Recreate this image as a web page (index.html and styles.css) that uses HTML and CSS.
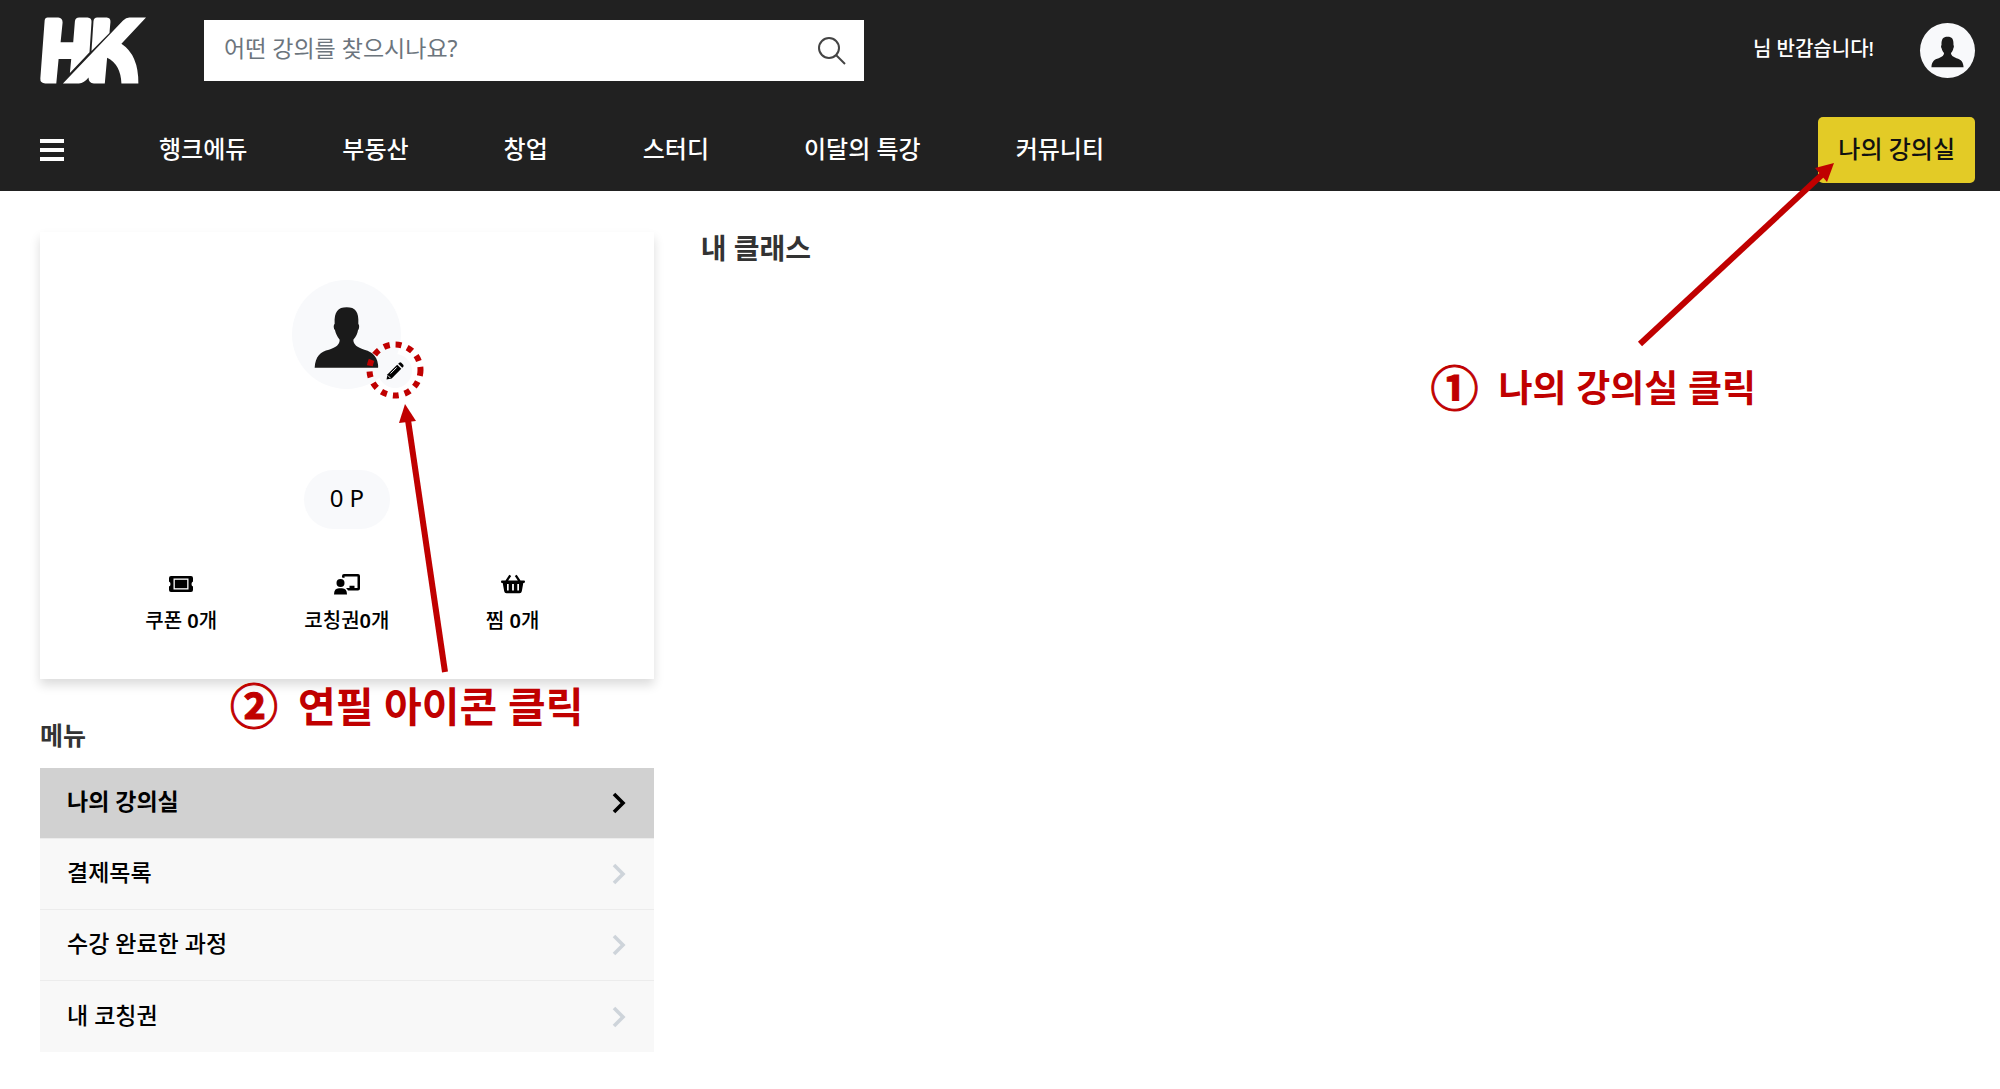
FILE: index.html
```html
<!DOCTYPE html>
<html lang="ko">
<head>
<meta charset="utf-8">
<meta name="viewport" content="width=device-width, initial-scale=1">
<title>나의 강의실</title>
<link rel="stylesheet" href="styles.css">
</head>
<body>
<svg class="sprite" aria-hidden="true">
  <symbol id="person" viewBox="67 57 327 327">
    <path d="M135 320C137 286 152 271 178 266C200 259 210 250 210 236C202 226 198 217 196 208C191 202 191 192 195 188C193 152 205 139 231 139C257 139 268 152 266 188C270 193 269 203 265 208C263 218 260 226 251 236C251 250 262 259 284 266C312 273 325 290 326 320Z"/>
  </symbol>
  <symbol id="chevron" viewBox="0 0 14 22">
    <path d="M2 2L11 11L2 20" fill="none" stroke="currentColor" stroke-width="3.600"/>
  </symbol>
</svg>

<header class="site-header">
  <div class="header-top">
    <a class="logo" href="#" aria-label="HK">
      <svg viewBox="119 50 319 201" aria-hidden="true">
        <path d="M142 51H174Q187 52 187 66L181 126H219L224 63Q225 51 237 51H262Q275 52 274 65L268 156L209 218L213 176H175L168 250H135Q119 249 120 235L133 60Q134 51 142 51Z"/>
        <path d="M291 51H320Q332 52 331 65L328 98L274 152L280 62Q281 51 291 51Z"/>
        <path d="M438 51H388Q378 51 369 60L188 250H236Q252 249 265 232Q265 249 281 250H314L321 172Q362 192 364 250H415Q416 164 364 130Z"/>
      </svg>
    </a>
    <form class="search">
      <input class="search-input" type="search" placeholder="어떤 강의를 찾으시나요?" aria-label="강의 검색">
      <button class="search-button" type="button" aria-label="검색">
        <svg viewBox="0 0 28 28"><circle cx="11" cy="11" r="10"/><path d="M18 18L27 27"/></svg>
      </button>
    </form>
    <div class="account">
      <span class="greeting">님 반갑습니다!</span>
      <a class="avatar avatar-small" href="#" aria-label="내 프로필"><svg><use href="#person"/></svg></a>
    </div>
  </div>
  <nav class="header-nav">
    <button class="hamburger" type="button" aria-label="전체 메뉴"><span></span><span></span><span></span></button>
    <a href="#">행크에듀</a>
    <a href="#">부동산</a>
    <a href="#">창업</a>
    <a href="#">스터디</a>
    <a href="#">이달의 특강</a>
    <a href="#">커뮤니티</a>
    <button class="classroom-button" type="button">나의 강의실</button>
  </nav>
</header>

<main class="content">
  <aside>
    <section class="profile-card">
      <div class="profile-photo">
        <div class="avatar avatar-large"><svg><use href="#person"/></svg></div>
        <button class="edit-button" type="button" aria-label="프로필 수정">
          <svg viewBox="0 0 18 18">
            <path d="M0.500 17.500L1.600 12.300L11.200 2.700L15.300 6.800L5.700 16.400Z"/>
            <path d="M12.200 1.700L13.300 0.700Q14.300 0 15.300 0.800L17.200 2.700Q18 3.700 17.300 4.700L16.300 5.800Z"/>
            <path class="cut" d="M4.500 11.600L10.700 5.400M2 13.600L4.400 16"/>
          </svg>
        </button>
        <svg class="ring" viewBox="0 0 58 58"><circle cx="29" cy="29" r="25.500"/></svg>
      </div>
      <p class="points">0 P</p>
      <ul class="stats">
        <li>
          <svg viewBox="0 0 24 22">
            <path fill-rule="evenodd" d="M2 3H22Q24 3 24 5V8.500Q22.500 9 22.500 11T24 13.500V17Q24 19 22 19H2Q0 19 0 17V13.500Q1.500 13 1.500 11T0 8.500V5Q0 3 2 3ZM4.500 5.500V16.500H19.500V5.500Z"/>
            <path d="M5.800 6.800H18.200V15.200H5.800Z"/>
          </svg>
          <a href="#">쿠폰 <b>0</b>개</a>
        </li>
        <li>
          <svg viewBox="0 0 26 22">
            <circle cx="6.500" cy="10" r="4"/>
            <path d="M0 21.500Q0 15.200 5 15.200H8Q13 15.200 13 21.500Z"/>
            <path d="M8 4.500V3Q8 1 10 1H24Q26 1 26 3V15.500Q26 17.500 24 17.500H14Q13.300 16 12 15H15.500V12.800H20.500V15H23.500V3.500H10.500V5Q9.300 4.500 8 4.500Z"/>
          </svg>
          <a href="#">코칭권<b>0</b>개</a>
        </li>
        <li>
          <svg viewBox="0 0 24 22">
            <path fill-rule="evenodd" d="M0 8.500Q0 7.500 1 7.500H4.500L8.300 1.800L10.200 3L7.200 7.500H16.800L13.800 3L15.700 1.800L19.500 7.500H23Q24 7.500 24 8.500T23 10H22.300L20.800 18.200Q20.500 20.200 18.500 20.200H5.500Q3.500 20.200 3.200 18.200L1.700 10H1Q0 10 0 8.500ZM6 11V17.500H7.700V11ZM11.100 11V17.500H12.900V11ZM16.300 11V17.500H18V11Z"/>
          </svg>
          <a href="#">찜 <b>0</b>개</a>
        </li>
      </ul>
    </section>

    <h2 class="menu-title">메뉴</h2>
    <nav class="side-menu">
      <a class="active" href="#"><span>나의 강의실</span><svg><use href="#chevron"/></svg></a>
      <a href="#"><span>결제목록</span><svg><use href="#chevron"/></svg></a>
      <a href="#"><span>수강 완료한 과정</span><svg><use href="#chevron"/></svg></a>
      <a href="#"><span>내 코칭권</span><svg><use href="#chevron"/></svg></a>
    </nav>
  </aside>
  <section>
    <h1 class="class-title">내 클래스</h1>
  </section>
</main>

<svg class="arrow arrow-classroom" viewBox="0 0 200 190" aria-hidden="true">
  <path d="M4 184L190 11"/><polygon points="198,3 179,8 191,22"/>
</svg>
<p class="note note-classroom"><span class="num">①</span>나의 강의실 클릭</p>

<svg class="arrow arrow-pencil" viewBox="0 0 60 270" aria-hidden="true">
  <path d="M55 268L18 16"/><polygon points="15,0 9,19 26,17"/>
</svg>
<p class="note note-pencil"><span class="num">②</span>연필 아이콘 클릭</p>
</body>
</html>
```
FILE: styles.css
```css
* { box-sizing: border-box; }

body {
  position: relative;
  margin: 0;
  background: #fff;
  color: #000;
  font-family: "Noto Sans", "Noto Sans CJK KR", sans-serif;
  font-size: 23px;
}

h1, h2, p, ul { margin: 0; padding: 0; }
a { color: inherit; text-decoration: none; }
button { border: 0; padding: 0; font: inherit; color: inherit; background: none; cursor: pointer; }
svg { display: block; }
.sprite { position: absolute; width: 0; height: 0; }

/* Header */
.site-header {
  padding: 17px 25px 8px 40px;
  background: #212121;
  color: #fff;
}
.header-top { display: flex; align-items: center; }
.logo svg { width: 106px; height: 67px; fill: #fff; }
.search {
  display: flex;
  align-items: center;
  flex: 0 1 660px;
  height: 61px;
  margin-left: 58px;
  padding: 0 18px 0 20px;
  background: #fff;
}
.search-input {
  flex: 1;
  min-width: 0;
  border: 0;
  padding: 0 0 6px;
  outline: 0;
  background: none;
  font: inherit;
  color: #212529;
}
.search-input::placeholder { color: #6c757d; opacity: 1; }
.search-button svg { width: 28px; height: 28px; fill: none; stroke: #444; stroke-width: 2; }
.account { display: flex; align-items: center; gap: 46px; margin-left: auto; }
.greeting { padding-bottom: 6px; font-size: 20px; font-weight: 500; }

.avatar { border-radius: 50%; background: #f8f9fb; }
.avatar svg { width: 100%; height: 100%; fill: #1a1a1a; }
.avatar-small { width: 55px; height: 55px; }
.avatar-large { width: 109px; height: 109px; }

.header-nav {
  display: flex;
  align-items: center;
  gap: 95px;
  margin-top: 33px;
  font-size: 24px;
  font-weight: 500;
}
.header-nav a { padding-bottom: 6px; }
.hamburger { display: grid; gap: 5px; width: 24px; }
.hamburger span { height: 4px; background: #fff; }
.classroom-button {
  height: 66px;
  margin-left: auto;
  padding: 0 20px 6px;
  border-radius: 5px;
  background: #e3cb26;
  color: #111;
}

/* Page body */
.content {
  display: grid;
  grid-template-columns: 32% minmax(0, 1fr);
  gap: 47px;
  padding: 41px 42px 36px 40px;
}
.profile-card {
  display: flex;
  flex-direction: column;
  align-items: center;
  padding: 48px 0 44px;
  box-shadow: 0 6px 10px rgba(0, 0, 0, 0.14);
}
.profile-photo { position: relative; }
.edit-button {
  position: absolute;
  right: -11px;
  bottom: 1px;
  display: grid;
  place-items: center;
  width: 34px;
  height: 34px;
  border-radius: 50%;
  background: #f8f9fb;
}
.edit-button svg { width: 18px; height: 18px; }
.edit-button .cut { fill: none; stroke: #f8f9fb; stroke-width: 1; }
.ring {
  position: absolute;
  right: -23px;
  bottom: -10px;
  width: 58px;
  height: 58px;
  fill: none;
  stroke: #c00000;
  stroke-width: 6;
  stroke-dasharray: 6 6;
  pointer-events: none;
}
.points {
  height: 59px;
  margin-top: 81px;
  padding: 0 26px;
  border-radius: 30px;
  background: #f8f9fb;
  font-size: 24px;
  line-height: 56px;
}
.stats {
  display: grid;
  grid-template-columns: repeat(3, 1fr);
  width: 81%;
  margin-top: 44px;
  list-style: none;
  font-size: 20px;
  font-weight: 500;
  line-height: 28px;
}
.stats li { display: grid; justify-items: center; gap: 12px; }
.stats li svg { height: 22px; }
.stats b { font-weight: 600; }

.menu-title {
  margin: 38px 0 15px;
  color: #333;
  font-size: 25px;
  line-height: 36px;
}
.side-menu { background: #f8f8f8; font-weight: 500; }
.side-menu a {
  display: flex;
  align-items: center;
  justify-content: space-between;
  height: 71px;
  padding: 0 28px 0 27px;
  border-bottom: 1px solid #ececec;
}
.side-menu a:last-child { border-bottom: 0; }
.side-menu span { padding-bottom: 6px; }
.side-menu svg { width: 14px; height: 22px; color: #ced4da; }
.side-menu .active { background: #d1d1d1; font-weight: 600; }
.side-menu .active svg { color: #000; }
.class-title { color: #333; font-size: 28px; line-height: 32px; }

/* Guide callouts drawn over the page */
.arrow { position: absolute; fill: #c00000; pointer-events: none; }
.arrow path { fill: none; stroke: #c00000; stroke-width: 6; }
.arrow-classroom { top: 160px; right: 164px; width: 200px; height: 190px; }
.arrow-pencil { top: 404px; left: 390px; width: 60px; height: 270px; }
.note {
  position: absolute;
  display: flex;
  align-items: center;
  gap: 20px;
  color: #c00000;
  font-weight: 700;
  line-height: 56px;
  white-space: nowrap;
}
.num { font-size: 48px; -webkit-text-stroke: 1px #c00000; }
.note-classroom { top: 360px; right: 244px; font-size: 37px; }
.note-pencil { top: 678px; left: 230px; font-size: 41px; }
```
